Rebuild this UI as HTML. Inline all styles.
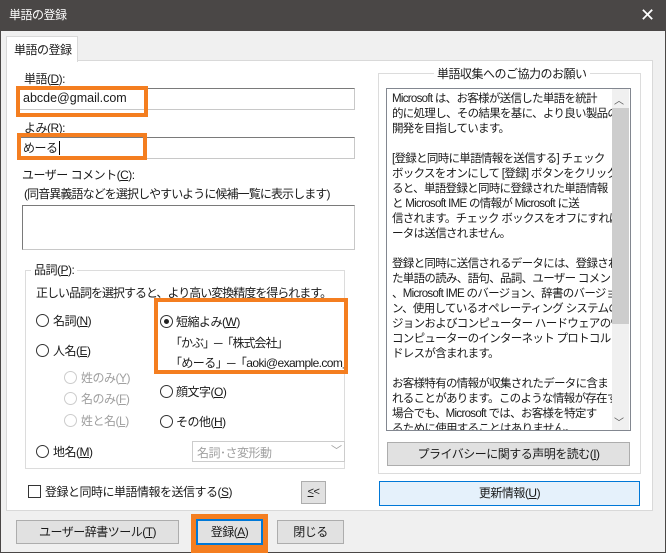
<!DOCTYPE html>
<html><head><meta charset="utf-8"><style>
*{margin:0;padding:0;box-sizing:border-box}
body{width:666px;height:553px;overflow:hidden;background:#f0f0f0;font-family:"Liberation Sans","Noto Sans CJK JP",sans-serif;font-size:12px;color:#1a1a1a;position:relative;letter-spacing:-0.5px}
.a{position:absolute;white-space:nowrap}
.title{left:0;top:0;width:666px;height:31px;background:#4a4746;color:#fff;font-size:12px;line-height:31px;padding-left:9px}
.frame{left:0;top:31px;width:666px;height:522px;border:1px solid #4a4746;border-top:none}
.panel{left:6px;top:60px;width:647px;height:451px;background:#fff;border:1px solid #d9d9d9}
.tab{left:6px;top:36px;width:72px;height:26px;background:#fff;border:1px solid #d9d9d9;border-bottom:none;padding:4px 0 0 7px}
.inp{background:#fff;border:1px solid #c8c8c8;border-top-color:#7a7a7a;border-left-color:#7a7a7a;height:22px}
.or{border:4px solid #f47e20}
.rad{width:13px;height:13px;border:1px solid #333;border-radius:50%;background:#fff}
.rad.d{border-color:#ccc}
.rad.on::after{content:"";position:absolute;left:3px;top:3px;width:5px;height:5px;border-radius:50%;background:#222}
.btn{background:#e1e1e1;border:1px solid #adadad;text-align:center}
.gray{color:#a0a0a0}
u{text-decoration:underline}
.grp{border:1px solid #dcdcdc}
.txt{white-space:nowrap;letter-spacing:-0.9px}
</style></head><body>
<div class="a title">単語の登録</div>
<div class="a" style="left:640px;top:5px;color:#fff;font-size:18px;font-family:'DejaVu Sans',sans-serif;font-weight:200">✕</div>
<div class="a frame"></div>
<div class="a panel"></div>
<div class="a tab">単語の登録</div>

<div class="a" style="left:24px;top:70px">単語(<u>D</u>):</div>
<div class="a inp" style="left:17px;top:88px;width:338px"></div>
<div class="a" style="left:23px;top:91px;font-size:12.5px;letter-spacing:0">abcde@gmail.com</div>
<div class="a or" style="left:16px;top:86px;width:132px;height:31px"></div>

<div class="a" style="left:24px;top:119px">よみ(<u>R</u>):</div>
<div class="a inp" style="left:17px;top:137px;width:338px"></div>
<div class="a" style="left:23px;top:139px">めーる<span style="border-left:1px solid #000;margin-left:1px"></span></div>
<div class="a or" style="left:17px;top:133px;width:130px;height:27px"></div>

<div class="a" style="left:22px;top:166px">ユーザー コメント(<u>C</u>):</div>
<div class="a" style="left:24px;top:185px;letter-spacing:-0.9px">(同音異義語などを選択しやすいように候補一覧に表示します)</div>
<div class="a inp" style="left:22px;top:205px;width:333px;height:45px"></div>

<div class="a grp" style="left:25px;top:270px;width:320px;height:199px"></div>
<div class="a" style="left:31px;top:261px;background:#fff;padding:0 3px">品詞(<u>P</u>):</div>
<div class="a" style="left:36px;top:284px;letter-spacing:-1px">正しい品詞を選択すると、より高い変換精度を得られます。</div>

<div class="a rad" style="left:36px;top:314px"></div><div class="a" style="left:53px;top:312px">名詞(<u>N</u>)</div>
<div class="a rad" style="left:36px;top:344px"></div><div class="a" style="left:53px;top:342px">人名(<u>E</u>)</div>
<div class="a rad d" style="left:64px;top:371px"></div><div class="a gray" style="left:81px;top:369px">姓のみ(<u>Y</u>)</div>
<div class="a rad d" style="left:64px;top:392px"></div><div class="a gray" style="left:81px;top:390px">名のみ(<u>F</u>)</div>
<div class="a rad d" style="left:64px;top:414px"></div><div class="a gray" style="left:81px;top:412px">姓と名(<u>L</u>)</div>
<div class="a rad" style="left:36px;top:445px"></div><div class="a" style="left:53px;top:443px">地名(<u>M</u>)</div>

<div class="a rad on" style="left:160px;top:315px"></div><div class="a" style="left:176px;top:313px">短縮よみ(<u>W</u>)</div>
<div class="a" style="left:170px;top:334px;letter-spacing:-1px">「かぶ」─「株式会社」</div>
<div class="a" style="left:170px;top:354px;letter-spacing:-0.6px">「めーる」─「aoki@example.com」</div>
<div class="a or" style="left:154px;top:298px;width:194px;height:76px"></div>
<div class="a rad" style="left:160px;top:385px"></div><div class="a" style="left:176px;top:383px">顔文字(<u>O</u>)</div>
<div class="a rad" style="left:160px;top:415px"></div><div class="a" style="left:176px;top:413px">その他(<u>H</u>)</div>
<div class="a" style="left:192px;top:441px;width:153px;height:21px;border:1px solid #ccc;background:#fff"></div>
<div class="a gray" style="left:197px;top:444px">名詞･さ変形動</div>
<div class="a gray" style="left:331px;top:442px;font-size:11px">﹀</div>

<div class="a" style="left:28px;top:485px;width:13px;height:13px;border:1px solid #333;background:#fff"></div>
<div class="a" style="left:45px;top:483px">登録と同時に単語情報を送信する(<u>S</u>)</div>
<div class="a btn" style="left:301px;top:481px;width:25px;height:23px;line-height:21px;font-size:11px"><u>&lt;</u>&lt;</div>

<div class="a grp" style="left:378px;top:73px;width:263px;height:401px"></div>
<div class="a" style="left:434px;top:65px;background:#fff;padding:0 3px">単語収集へのご協力のお願い</div>
<div class="a" style="left:386px;top:88px;width:245px;height:343px;border:1px solid #828790;background:#fff;overflow:hidden"></div>
<div class="a txt" style="left:392px;top:92px;width:220px;height:338px;overflow:hidden;line-height:15px;font-size:11.5px;letter-spacing:-0.7px">
Microsoft は、お客様が送信した単語を統計<br>的に処理し、その結果を基に、より良い製品の<br>開発を目指しています。<br><br>[登録と同時に単語情報を送信する] チェック<br>ボックスをオンにして [登録] ボタンをクリックす<br>ると、単語登録と同時に登録された単語情報<br>と Microsoft IME の情報が Microsoft に送<br>信されます。チェック ボックスをオフにすれば、デ<br>ータは送信されません。<br><br>登録と同時に送信されるデータには、登録され<br>た単語の読み、語句、品詞、ユーザー コメント<br>、Microsoft IME のバージョン、辞書のバージョ<br>ン、使用しているオペレーティング システムのバー<br>ジョンおよびコンピューター ハードウェアの情報、<br>コンピューターのインターネット プロトコル (IP) ア<br>ドレスが含まれます。<br><br>お客様特有の情報が収集されたデータに含ま<br>れることがあります。このような情報が存在する<br>場合でも、Microsoft では、お客様を特定す<br>るために使用することはありません。</div>
<div class="a" style="left:612px;top:89px;width:17px;height:341px;background:#f0f0f0"></div>
<div class="a" style="left:612px;top:108px;width:17px;height:216px;background:#cdcdcd"></div>
<div class="a" style="left:614px;top:92px;font-size:10px;color:#555">︿</div>
<div class="a" style="left:614px;top:414px;font-size:10px;color:#555">﹀</div>
<div class="a btn" style="left:387px;top:442px;width:243px;height:24px;line-height:22px">プライバシーに関する声明を読む(<u>I</u>)</div>
<div class="a" style="left:379px;top:481px;width:261px;height:25px;background:#e5f1fb;border:1px solid #0078d7;text-align:center;line-height:23px">更新情報(<u>U</u>)</div>

<div class="a btn" style="left:16px;top:520px;width:163px;height:24px;line-height:22px">ユーザー辞書ツール(<u>T</u>)</div>
<div class="a" style="left:191px;top:514px;width:77px;height:39px;background:#f47e20"></div>
<div class="a" style="left:196px;top:519px;width:67px;height:26px;background:#e1e1e1;border:2px solid #0078d7;text-align:center;line-height:22px">登録(<u>A</u>)</div>
<div class="a btn" style="left:277px;top:520px;width:67px;height:24px;line-height:22px">閉じる</div>
</body></html>
